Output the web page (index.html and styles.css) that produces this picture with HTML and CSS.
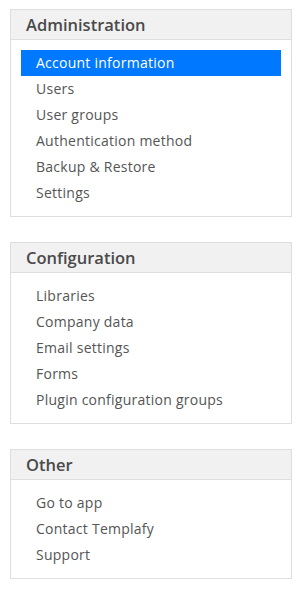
FILE: index.html
```html
<!DOCTYPE html>
<html lang="en">
<head>
    <meta charset="UTF-8">
    <meta name="viewport" content="width=device-width, initial-scale=1.0">
    <title>Admin menu</title>
    <link rel="stylesheet" href="styles.css">
</head>
<body>
    <nav class="side-menu">
        <section class="menu-box">
            <h2 class="menu-title">Administration</h2>
            <ul class="menu-list">
                <li class="menu-item active">Account information</li>
                <li class="menu-item">Users</li>
                <li class="menu-item">User groups</li>
                <li class="menu-item">Authentication method</li>
                <li class="menu-item">Backup &amp; Restore</li>
                <li class="menu-item">Settings</li>
            </ul>
        </section>

        <section class="menu-box">
            <h2 class="menu-title">Configuration</h2>
            <ul class="menu-list">
                <li class="menu-item">Libraries</li>
                <li class="menu-item">Company data</li>
                <li class="menu-item">Email settings</li>
                <li class="menu-item">Forms</li>
                <li class="menu-item">Plugin configuration groups</li>
            </ul>
        </section>

        <section class="menu-box">
            <h2 class="menu-title">Other</h2>
            <ul class="menu-list">
                <li class="menu-item">Go to app</li>
                <li class="menu-item">Contact Templafy</li>
                <li class="menu-item">Support</li>
            </ul>
        </section>
    </nav>
</body>
</html>
```

FILE: styles.css
```css
* {
    margin: 0;
    padding: 0;
    box-sizing: border-box;
}

body {
    font-family: 'Open Sans', sans-serif;
    color: #555;
    background-color: white;
}

.side-menu {
    width: 282px;
    margin: 9px 0 0 10px;
    display: flex;
    flex-direction: column;
    gap: 25px;
}

.menu-box {
    border: 1px solid #dedede;
}

.menu-title {
    height: 30px;
    padding: 0 15px;
    background-color: #f1f1f1;
    border-bottom: 1px solid #dedede;
    font-size: 16.5px;
    font-weight: 600;
    line-height: 30px;
    color: #4a4a4a;
}

.menu-list {
    list-style: none;
    padding: 10px;
}

.menu-item {
    height: 26px;
    padding-left: 15px;
    font-size: 14px;
    letter-spacing: 0.25px;
    line-height: 26px;
    color: #555;
    cursor: pointer;
}

.menu-item.active {
    background-color: #0078ff;
    color: white;
}
```
